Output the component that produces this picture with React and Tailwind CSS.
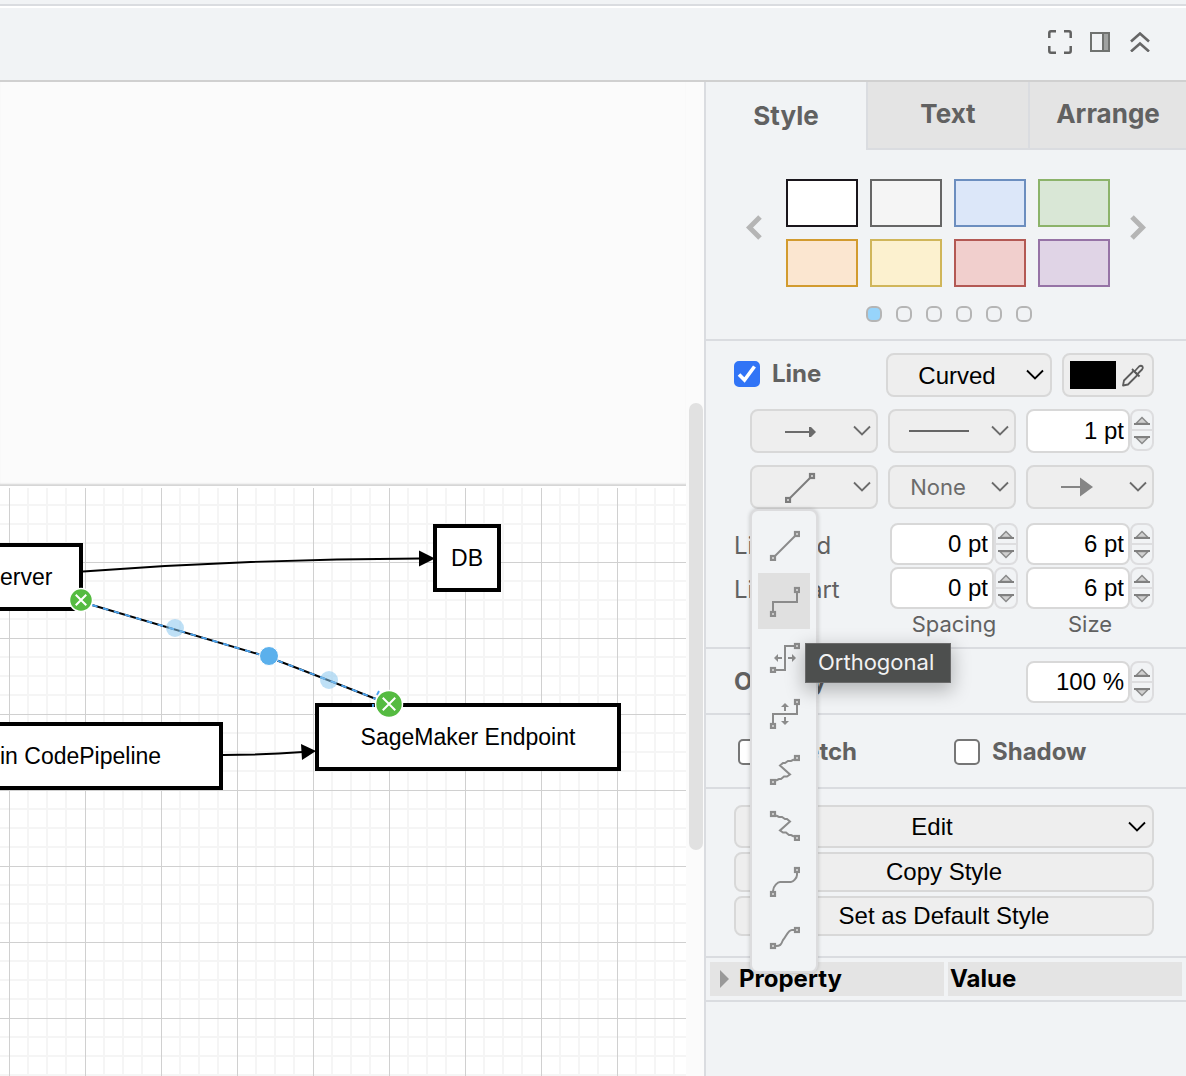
import React from "react";

const ICON = "#8b8b8b";

function Chevron({ className = "" }) {
  return (
    <svg className={"pointer-events-none " + className} width="18" height="12" viewBox="0 0 18 12" fill="none" stroke="currentColor" strokeWidth="1.8" aria-hidden="true">
      <path d="M1 1.5 9 9.5 17 1.5" />
    </svg>
  );
}

function Handle({ x, y }) {
  return <rect x={x - 2} y={y - 2} width="4" height="4" fill="#d8d8d8" strokeWidth="2.2" />;
}

const ROUTES = [
  { label: "Straight", d: "M7 27 27 7", ends: [[5, 29], [29, 5]] },
  { label: "Orthogonal", d: "M29 8V17H5V26", ends: [[5, 29], [29, 5]], active: true },
  {
    label: "Simple horizontal",
    d: "M26 5H17V29H8",
    ends: [[5, 29], [29, 5]],
    thin: "M14 17H8M20 17H26",
    heads: "M6 17 10 13V21ZM28 17 24 13V21Z",
  },
  {
    label: "Simple vertical",
    d: "M29 8V17H5V26",
    ends: [[5, 29], [29, 5]],
    thin: "M17 14V8M17 20V26",
    heads: "M17 6 13 10H21ZM17 28 13 24H21Z",
  },
  { label: "Isometric", d: "M26 6.5 23 8H20L17 10H15L12 12.5 22 21.5 19 23.5H16L13 26H11L8 27.5", ends: [[5, 29], [29, 5]] },
  { label: "Isometric vertical", d: "M8 6.5 11 8H14L17 10H19L22 12.5 12 21.5 15 23.5H18L21 26H23L26 27.5", ends: [[5, 5], [29, 29]] },
  { label: "Curved", d: "M29 8V10C29 13 25 17 23 17H12C10 17 5 21 5 26", ends: [[5, 29], [29, 5]] },
  { label: "Entity relation", d: "M26 9H24C20 9 18 16 15 19C13 24 12 25 8 25", ends: [[5, 25], [29, 9]] },
];

function RouteIcon({ route }) {
  return (
    <svg width="32" height="32" viewBox="0 0 32 32" fill="none" stroke={ICON} strokeWidth="2" aria-hidden="true">
      <path d={route.d} />
      {route.thin && <path d={route.thin} />}
      {route.heads && <path d={route.heads} fill={ICON} stroke="none" />}
      {route.ends.map(([x, y]) => (
        <Handle key={x + "-" + y} x={x} y={y} />
      ))}
    </svg>
  );
}

function Dropdown({ label, children }) {
  return (
    <button type="button" aria-label={label} className="flex h-11 w-32 items-center rounded-lg border-2 border-[#d8d8d8] bg-[#eeeeee] pr-[5px] pl-2">
      <span className="flex flex-1 justify-center">{children}</span>
      <Chevron className="ml-3 text-[#6b6b6b]" />
    </button>
  );
}

function Select({ label, value, className, iconClass, textClass }) {
  return (
    <div className={"relative " + className}>
      <select
        aria-label={label}
        defaultValue={value}
        className={"h-full w-full appearance-none rounded-lg border-2 border-[#d8d8d8] bg-[#eeeeee] text-center [text-align-last:center] " + textClass}
      >
        <option>{value}</option>
      </select>
      <Chevron className={"absolute top-1/2 -translate-y-1/2 " + iconClass} />
    </div>
  );
}

function Stepper({ label, value, tall = false }) {
  return (
    <div className="flex w-32 items-start">
      <input
        type="text"
        aria-label={label}
        defaultValue={value}
        className={
          "w-[104px] rounded-lg border-2 border-[#d8d8d8] bg-white pr-1 text-right font-['Liberation_Sans',sans-serif] text-2xl text-black " +
          (tall ? "h-11" : "h-[42px]")
        }
      />
      <div className="flex h-[42px] w-6 flex-col rounded-lg border-2 border-[#dddddf]">
        <button type="button" aria-label={label + " up"} className="flex flex-1 items-center justify-center border-b-2 border-[#dddddf]">
          <svg width="16" height="9" viewBox="0 0 16 9" aria-hidden="true">
            <path d="M2 7.5 8 1.5 14 7.5Z" fill="#d0d0d0" stroke="#8b8b8b" strokeWidth="1.5" />
            <path d="M0 8H16" stroke="#808080" strokeWidth="2" />
          </svg>
        </button>
        <button type="button" aria-label={label + " down"} className="flex flex-1 items-center justify-center">
          <svg width="16" height="9" viewBox="0 0 16 9" aria-hidden="true">
            <path d="M2 1.5 8 7.5 14 1.5Z" fill="#d0d0d0" stroke="#8b8b8b" strokeWidth="1.5" />
            <path d="M0 1H16" stroke="#808080" strokeWidth="2" />
          </svg>
        </button>
      </div>
    </div>
  );
}

function Check({ label, checked = false }) {
  return (
    <label className="flex items-center gap-3 text-2xl font-bold">
      <span className="relative flex">
        <input
          type="checkbox"
          defaultChecked={checked}
          className="peer size-[26px] appearance-none rounded-[5px] border-2 border-[#767676] bg-white checked:border-[#3174f6] checked:bg-[#3174f6]"
        />
        <svg className="pointer-events-none absolute inset-0 hidden peer-checked:block" width="26" height="26" viewBox="0 0 26 26" fill="none" stroke="#fff" strokeWidth="3.6" aria-hidden="true">
          <path d="M5 13.5 10.5 19 20.5 5.5" />
        </svg>
      </span>
      {label}
    </label>
  );
}

function RouteMenu() {
  return (
    <div role="menu" className="absolute top-full left-0 z-10 rounded-lg border-2 border-[#dcdcde] bg-[#f1f3f5] p-1.5 shadow-[0_0_4px_0_#00000033]">
      {ROUTES.map((route) => (
        <div key={route.label} className="relative">
          <button
            type="button"
            role="menuitem"
            aria-label={route.label}
            className={"flex h-14 w-[52px] items-center justify-center " + (route.active ? "bg-[#e0e0e0]" : "")}
          >
            <RouteIcon route={route} />
          </button>
          {route.active && (
            <div role="tooltip" className="absolute top-[70px] left-[47px] z-20 border border-[#6a6a6a] bg-[#4d4f4e] pt-1 pr-4 pb-1.5 pl-3 text-[22px] leading-7 text-[#f2f2f2] shadow-[0_6px_18px_2px_#00000040]">
              {route.label}
            </div>
          )}
        </div>
      ))}
    </div>
  );
}

const SWATCHES = [
  ["White", "border-[#1a161c] bg-white"],
  ["Grey", "border-[#666666] bg-[#f5f5f5]"],
  ["Blue", "border-[#6c8ebf] bg-[#dce7f9]"],
  ["Green", "border-[#8cb36a] bg-[#d9e7d6]"],
  ["Orange", "border-[#d29b2f] bg-[#fbe6d0]"],
  ["Yellow", "border-[#d0b65a] bg-[#fcf1cf]"],
  ["Red", "border-[#b35954] bg-[#f1cfcd]"],
  ["Purple", "border-[#9673a6] bg-[#e0d4e6]"],
];

function Palette() {
  return (
    <section className="flex flex-col items-center gap-[19px] border-b-2 border-[#dadce0] pt-[29px] pb-[17px]">
      <div className="flex items-start gap-5">
        <button type="button" aria-label="Previous styles" className="mt-9 mr-1">
          <svg width="16" height="26" viewBox="0 0 16 26" fill="none" stroke="#b5b5b5" strokeWidth="5" aria-hidden="true">
            <path d="M14 2 3.5 12.5 14 23" />
          </svg>
        </button>
        <div className="grid grid-cols-4 gap-3">
          {SWATCHES.map(([name, tone]) => (
            <button key={name} type="button" aria-label={name} className={"h-12 w-[72px] border-2 " + tone} />
          ))}
        </div>
        <button type="button" aria-label="Next styles" className="mt-9">
          <svg width="16" height="26" viewBox="0 0 16 26" fill="none" stroke="#b5b5b5" strokeWidth="5" aria-hidden="true">
            <path d="M2 2 12.5 12.5 2 23" />
          </svg>
        </button>
      </div>
      <div className="flex gap-3.5 pl-1.5">
        {[1, 2, 3, 4, 5, 6].map((n) => (
          <button
            key={n}
            type="button"
            aria-label={"Page " + n}
            className={"size-4 rounded-[6px] border-2 border-[#b5b5b5] " + (n === 1 ? "bg-[#97d4fb]" : "")}
          />
        ))}
      </div>
    </section>
  );
}

function LineSection() {
  return (
    <section className="flex flex-col gap-3 border-b-2 border-[#dadce0] pt-3 pr-8 pb-2.5 pl-7">
      <div className="flex gap-2.5">
        <div className="flex-1 pt-[5px]">
          <Check label="Line" checked />
        </div>
        <Select label="Line style" value="Curved" className="h-11 w-[166px]" iconClass="right-2 text-black" textClass="pt-0.5 pr-6 font-['Liberation_Sans',sans-serif] text-2xl text-black" />
        <button type="button" aria-label="Line colour" className="flex h-11 w-[92px] items-center gap-1.5 rounded-lg border-2 border-[#d8d8d8] bg-[#eeeeee] pl-1.5">
          <span className="h-7 w-[46px] bg-black" />
          <svg width="24" height="24" viewBox="0 0 24 24" fill="none" stroke="#5c5c5c" strokeWidth="1.8" strokeLinejoin="round" aria-hidden="true">
            <path d="M11.500 8 2 17.500 1 22.500 6 21.500 15.500 12" />
            <path d="M10 6 17.500 13.500" />
            <path d="M12.500 8.500 17 3.500Q19 2 20.500 3.500Q21.500 5 20 6.500L15 11.500Z" />
          </svg>
        </button>
      </div>
      <div className="flex justify-end gap-2.5">
        <Dropdown label="Connection">
          <svg width="32" height="12" viewBox="0 0 32 12" aria-hidden="true">
            <path d="M0 7H26" stroke="#6b6b6b" strokeWidth="2" />
            <path d="M24 2H26L31 7 26 12H24Z" fill="#6b6b6b" />
          </svg>
        </Dropdown>
        <Dropdown label="Pattern">
          <svg width="60" height="2" viewBox="0 0 60 2" aria-hidden="true">
            <path d="M0 1H60" stroke="#666" strokeWidth="2" />
          </svg>
        </Dropdown>
        <Stepper label="Line width" value="1 pt" tall />
      </div>
      <div className="flex justify-end gap-2.5">
        <div className="relative">
          <Dropdown label="Waypoints">
            <svg width="32" height="32" viewBox="0 0 32 32" fill="none" stroke="#7c7c7c" strokeWidth="2" aria-hidden="true">
              <path d="M5 27 25 7" />
              <Handle x={3} y={29} />
              <Handle x={27} y={5} />
            </svg>
          </Dropdown>
          <RouteMenu />
        </div>
        <Select label="Line start marker" value="None" className="h-11 w-32" iconClass="right-[7px] text-[#6b6b6b]" textClass="pr-7 text-[22px] text-[#6b6b6b]" />
        <Dropdown label="Line end marker">
          <svg width="32" height="20" viewBox="0 0 32 20" aria-hidden="true">
            <path d="M0 10H20" stroke="#858585" strokeWidth="2" />
            <path d="M19 0.5 32 10 19 19.5Z" fill="#858585" />
          </svg>
        </Dropdown>
      </div>
      <div className="flex flex-col gap-0.5 pt-0.5 text-[22px]">
        {["Line end", "Line start"].map((name) => (
          <div key={name} className="flex items-center gap-2">
            <span className="flex-1 pt-1 text-2xl">{name}</span>
            <Stepper label={name + " spacing"} value="0 pt" />
            <Stepper label={name + " size"} value="6 pt" />
          </div>
        ))}
        <div className="flex justify-end gap-2 text-center leading-[26px]">
          <span className="w-32">Spacing</span>
          <span className="w-32">Size</span>
        </div>
      </div>
    </section>
  );
}

function Sidebar() {
  return (
    <aside className="w-[482px] shrink-0 border-l-2 border-[#dadce0] bg-[#f1f3f5]">
      <div role="tablist" className="grid grid-cols-[160fr_162fr_158fr] text-[26px] font-bold">
        <button type="button" role="tab" aria-selected="true" className="h-[68px] pb-0.5">Style</button>
        <button type="button" role="tab" aria-selected="false" className="h-[68px] border-b-2 border-l-2 border-[#dadce0] bg-[#e4e4e4] pb-1">Text</button>
        <button type="button" role="tab" aria-selected="false" className="h-[68px] border-b-2 border-l-2 border-[#dadce0] bg-[#e4e4e4] pb-1">Arrange</button>
      </div>
      <Palette />
      <LineSection />
      <section className="flex items-center justify-between border-b-2 border-[#dadce0] pt-3 pr-8 pb-2.5 pl-7">
        <span className="text-2xl font-bold">Opacity</span>
        <Stepper label="Opacity" value="100 %" />
      </section>
      <section className="grid grid-cols-[216px_1fr] border-b-2 border-[#dadce0] pt-[21px] pb-[19px] pl-8">
        <Check label="Sketch" />
        <Check label="Shadow" />
      </section>
      <section className="flex flex-col gap-1 border-b-2 border-[#dadce0] pt-4 pr-8 pb-5 pl-7 font-['Liberation_Sans',sans-serif] text-2xl text-black">
        <Select label="Edit" value="Edit" className="h-[43px]" iconClass="right-2" textClass="pr-6" />
        <button type="button" className="h-10 rounded-lg border-2 border-[#d8d8d8] bg-[#eeeeee] leading-9">Copy Style</button>
        <button type="button" className="h-10 rounded-lg border-2 border-[#d8d8d8] bg-[#eeeeee] leading-9">Set as Default Style</button>
      </section>
      <div className="border-b-2 border-[#dadce0]">
        <table className="w-full table-fixed border-separate border-spacing-1 text-left text-2xl leading-[34px] text-black">
          <thead>
            <tr>
              <th scope="col" className="bg-[#e4e4e4] p-0">
                <span className="flex items-center gap-2.5 pl-2.5">
                  <svg width="9" height="18" viewBox="0 0 9 18" aria-hidden="true">
                    <path d="M0 0 9 9 0 18Z" fill="#999" />
                  </svg>
                  Property
                </span>
              </th>
              <th scope="col" className="bg-[#e4e4e4] p-0 pl-0.5">Value</th>
            </tr>
          </thead>
        </table>
      </div>
    </aside>
  );
}

function Endpoint({ x, y, r }) {
  const k = r * 0.5;
  return (
    <g>
      <circle cx={x} cy={y} r={r + 1} fill="#55bb41" stroke="#fff" strokeWidth="1.5" />
      <path d={`M${x - k} ${y - k} ${x + k} ${y + k}M${x + k} ${y - k} ${x - k} ${y + k}`} stroke="#fff" strokeWidth="2" />
    </g>
  );
}

const nodeBox = "absolute flex items-center border-4 border-black bg-white pt-px whitespace-nowrap";

function DiagramPage() {
  return (
    <div className="relative flex-1 overflow-hidden bg-white font-['Liberation_Sans',sans-serif] text-[23px] text-black">
      <svg className="absolute inset-x-0 top-0.5 h-full w-full" aria-hidden="true">
        <defs>
          <pattern id="grid" x="9" y="74" width="76" height="76" patternUnits="userSpaceOnUse">
            <path d="M19 0V76M38 0V76M57 0V76M0 19H76M0 38H76M0 57H76" stroke="#f5f5f5" strokeWidth="2" />
            <path d="M0.5 0V76M0 0.5H76" stroke="#d0d0d0" strokeWidth="1" />
          </pattern>
        </defs>
        <rect width="100%" height="100%" fill="url(#grid)" />
      </svg>
      <div className={nodeBox + " top-[57px] left-0 h-[68px] w-[83px] border-l-0"}>erver</div>
      <div className={nodeBox + " top-[38px] left-[433px] size-[68px] justify-center"}>DB</div>
      <div className={nodeBox + " top-[236px] left-0 h-[68px] w-[223px] border-l-0"}>in CodePipeline</div>
      <div className={nodeBox + " top-[217px] left-[315px] h-[68px] w-[306px] justify-center"}>SageMaker Endpoint</div>
      <svg className="absolute top-0 left-0" width="686" height="590" viewBox="0 486 686 590" fill="none" aria-hidden="true">
        <path d="M83 571.5Q250 559 420 558.5" stroke="#000" strokeWidth="1.9" />
        <path d="M419 550.5 435 558.5 419 566.5Z" fill="#000" />
        <path d="M223 755Q264 755 303 752" stroke="#000" strokeWidth="1.9" />
        <path d="M301 744 316 751 302 760Z" fill="#000" />
        <path d="M92 605 268 657Q300 669 376 699" stroke="#000" strokeWidth="1.9" />
        <path d="M92 605 268 657Q300 669 376 699M379 691 377 695M373 704V707" stroke="#4aa3f0" strokeWidth="1.9" strokeDasharray="5.7" />
        <circle cx="175" cy="628" r="9" fill="#88c6ee" fillOpacity="0.55" />
        <circle cx="269" cy="656" r="9.5" fill="#5bb0ec" stroke="#fff" />
        <circle cx="329" cy="680" r="9" fill="#88c6ee" fillOpacity="0.55" />
        <Endpoint x={81} y={600} r={10.5} />
        <Endpoint x={389} y={704} r={12.5} />
      </svg>
    </div>
  );
}

export default function App() {
  return (
    <div className="flex min-h-screen flex-col bg-[#f1f3f5] font-[Inter,sans-serif] text-[#616161]">
      <div className="h-1.5 border-b-2 border-[#dadce0]" />
      <header className="flex h-[76px] items-center justify-end gap-[18px] border-t-2 border-b-2 border-t-white border-b-[#d0d0d0] pr-9 pb-1">
        <button type="button" aria-label="Fullscreen">
          <svg width="24" height="24" viewBox="0 0 24 24" fill="none" stroke="#616161" strokeWidth="2.5" aria-hidden="true">
            <path d="M1.3 8V3Q1.3 1.3 3 1.3H8M16 1.3H21Q22.7 1.3 22.7 3V8M22.7 16V21Q22.7 22.7 21 22.7H16M8 22.7H3Q1.3 22.7 1.3 21V16" />
          </svg>
        </button>
        <button type="button" aria-label="Format panel">
          <svg width="20" height="20" viewBox="0 0 20 20" fill="none" stroke="#707270" strokeWidth="2" aria-hidden="true">
            <rect x="1" y="1" width="18" height="18" />
            <rect x="13" y="1" width="6" height="18" fill="#a0a2a1" />
          </svg>
        </button>
        <button type="button" aria-label="Collapse" className="pl-0.5">
          <svg width="20" height="20" viewBox="0 0 20 20" fill="none" stroke="#666" strokeWidth="2.6" aria-hidden="true">
            <path d="M1 9.5 10 1.5 19 9.5M1 19.5 10 11.5 19 19.5" />
          </svg>
        </button>
      </header>
      <main className="flex flex-1">
        <div className="flex min-w-0 flex-1 bg-[#fbfbfb]">
          <div className="flex min-w-0 flex-1 flex-col">
            <div className="h-[404px] shadow-[inset_0_-3px_2px_-1px_#d4d4d4]" />
            <DiagramPage />
          </div>
          <div className="w-[18px] pl-[3px]">
            <div className="mt-[321px] h-[447px] w-3.5 rounded-full bg-[#e1e1e1]" />
          </div>
        </div>
        <Sidebar />
      </main>
    </div>
  );
}
